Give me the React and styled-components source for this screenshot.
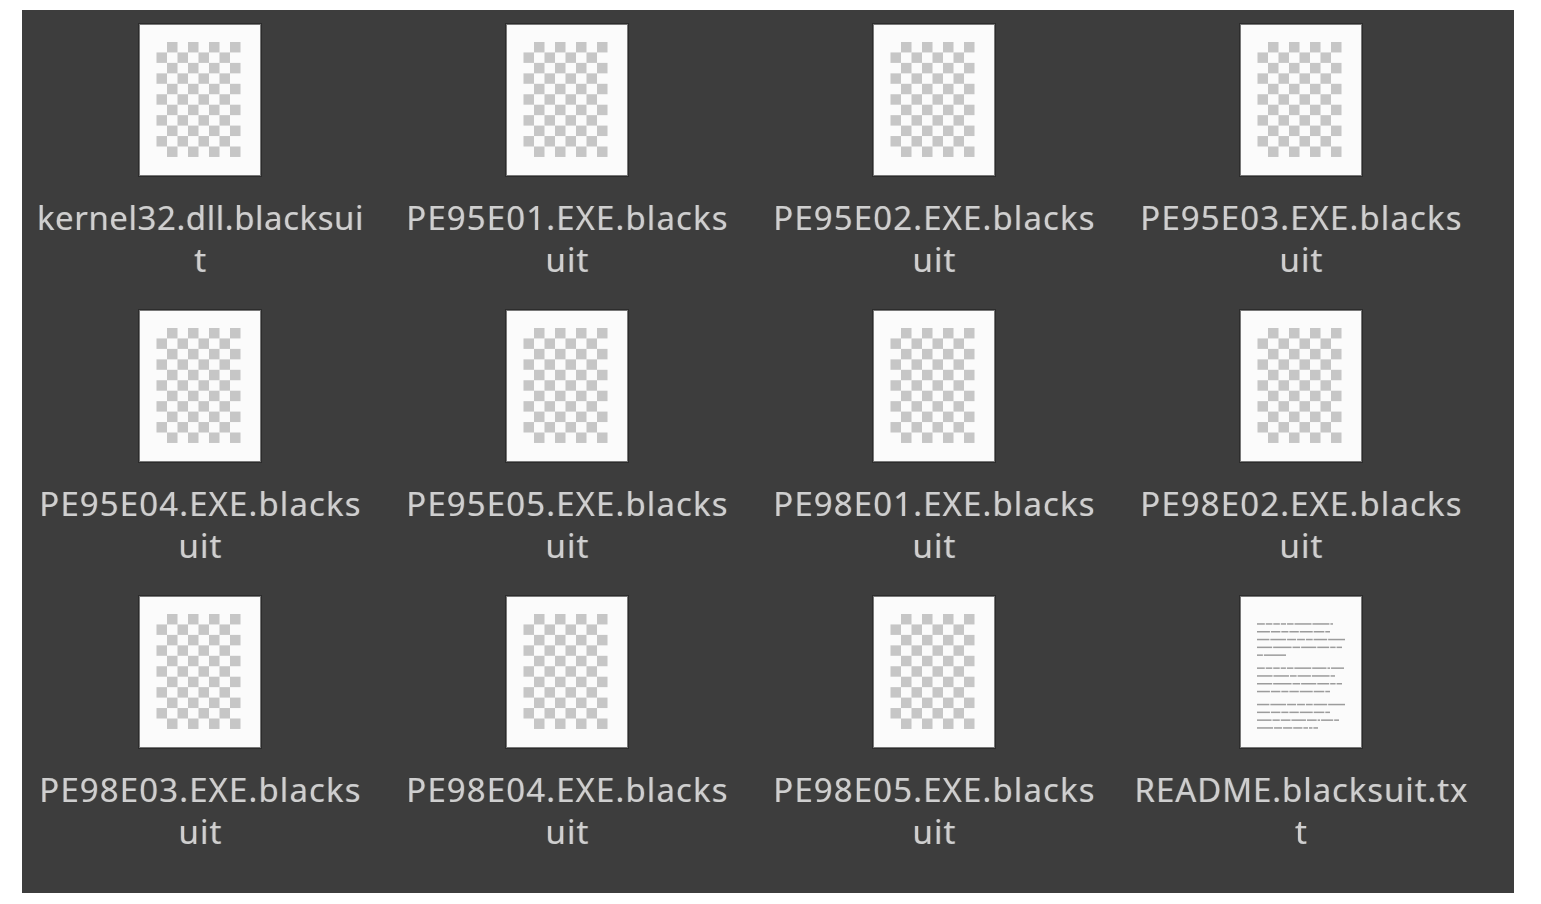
import React from "react";
import styled, { createGlobalStyle } from "styled-components";

const GlobalStyle = createGlobalStyle`
  html, body {
    margin: 0;
    padding: 0;
    background: #ffffff;
  }
  body {
    font-family: "Noto Sans", "Open Sans", sans-serif;
  }
`;

const Page = styled.div`
  width: 1541px;
  height: 904px;
  padding: 10px 0 0 22px;
  box-sizing: border-box;
  overflow: hidden;
`;

const Panel = styled.div`
  width: 1492px;
  height: 883px;
  box-sizing: border-box;
  padding: 13px 0 0 8px;
  background: #3d3d3d;
  display: grid;
  grid-template-columns: repeat(4, 340px);
  grid-auto-rows: 259px;
  column-gap: 27px;
  row-gap: 27px;
`;

const Item = styled.div`
  display: flex;
  flex-direction: column;
  align-items: center;
`;

const Thumb = styled.svg`
  display: block;
  width: 124px;
  height: 154px;
  filter: blur(0.6px);
`;

const Label = styled.div`
  margin: 20px 0 0 1px;
  width: 340px;
  text-align: center;
  white-space: pre;
  font-size: 33px;
  line-height: 42px;
  letter-spacing: ${({ $spacing }) => $spacing}px;
  color: #cfcfcf;
  text-shadow: -0.7px 0 rgba(110, 170, 225, 0.35), 0.7px 0 rgba(225, 160, 90, 0.35);
  filter: blur(0.55px);
`;

const files = [
  ["kernel32.dll.blacksui\nt", "image", 0.55],
  ["PE95E01.EXE.blacks\nuit", "image", 1.1],
  ["PE95E02.EXE.blacks\nuit", "image", 1.1],
  ["PE95E03.EXE.blacks\nuit", "image", 1.1],
  ["PE95E04.EXE.blacks\nuit", "image", 1.1],
  ["PE95E05.EXE.blacks\nuit", "image", 1.1],
  ["PE98E01.EXE.blacks\nuit", "image", 1.1],
  ["PE98E02.EXE.blacks\nuit", "image", 1.1],
  ["PE98E03.EXE.blacks\nuit", "image", 1.1],
  ["PE98E04.EXE.blacks\nuit", "image", 1.1],
  ["PE98E05.EXE.blacks\nuit", "image", 1.1],
  ["README.blacksuit.tx\nt", "text", 0.9],
];

// squares of the "no preview" checker, 11 rows, odd ones start further left
const checks = [];
for (let row = 0; row < 11; row++) {
  for (let col = 0; col < 4; col++) {
    checks.push({
      x: (row % 2 === 0 ? 29 : 18.5) + col * 21,
      y: 19 + row * 10.45,
    });
  }
}

// tiny text on the README preview: line width, then relative word lengths
const paragraphs = [
  [
    [76, [6, 5, 5, 4, 5, 13, 13, 2]],
    [73, [11, 8, 6, 8, 11, 9, 4]],
    [88, [11, 14, 8, 7, 6, 12, 15]],
    [85, [14, 17, 7, 14, 11, 5, 5]],
    [29, [4, 15]],
  ],
  [
    [87, [6, 5, 5, 4, 5, 13, 11, 2, 10]],
    [78, [14, 14, 6, 12, 16, 4]],
    [85, [14, 17, 7, 14, 11, 5, 5]],
    [73, [11, 8, 6, 8, 11, 9, 4]],
  ],
  [
    [88, [11, 14, 8, 7, 6, 12, 15]],
    [73, [11, 8, 6, 8, 11, 9, 4]],
    [82, [12, 6, 8, 12, 8, 2, 10, 4]],
    [61, [14, 7, 8, 8, 4, 3, 4]],
  ],
];

const textBars = [];
let barY = 28.2;
paragraphs.forEach((para) => {
  para.forEach(([width, words]) => {
    const gap = 1;
    const total = words.reduce((sum, w) => sum + w, 0);
    const scale = (width - gap * (words.length - 1)) / total;
    let x = 18;
    words.forEach((w) => {
      textBars.push({ x, y: barY, w: w * scale });
      x += w * scale + gap;
    });
    barY += 7.8;
  });
  barY += 5.2;
});

const FilePreview = ({ kind }) => (
  <Thumb viewBox="0 0 124 154">
    <rect x="0" y="0" width="124" height="154" fill="#2c2c2c" />
    <rect x="1" y="1" width="122" height="152" fill="#787878" />
    <rect x="2" y="2" width="120" height="150" fill="#fbfbfb" />
    {kind === "image"
      ? checks.map((c, i) => (
          <rect key={i} x={c.x} y={c.y} width="10.5" height="10.45" fill="#c6c6c6" />
        ))
      : textBars.map((l, i) => (
          <rect key={i} x={l.x} y={l.y} width={l.w} height="1.5" fill="#9c9c9c" />
        ))}
  </Thumb>
);

export default function App() {
  return (
    <Page>
      <GlobalStyle />
      <Panel>
        {files.map(([name, kind, spacing]) => (
          <Item key={name}>
            <FilePreview kind={kind} />
            <Label $spacing={spacing}>{name}</Label>
          </Item>
        ))}
      </Panel>
    </Page>
  );
}
